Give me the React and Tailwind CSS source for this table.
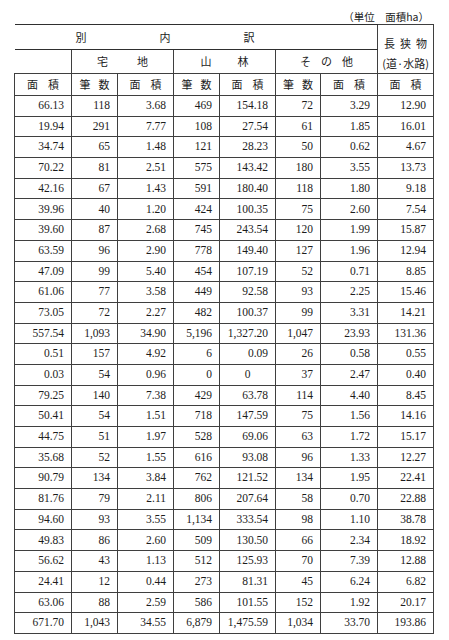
import React from "react";

// 内訳 table rows: 面積 | 宅地(筆数, 面積) | 山林(筆数, 面積) | その他(筆数, 面積) | 長狭物 面積
const rows = [
  ["66.13", "118", "3.68", "469", "154.18", "72", "3.29", "12.90"],
  ["19.94", "291", "7.77", "108", "27.54", "61", "1.85", "16.01"],
  ["34.74", "65", "1.48", "121", "28.23", "50", "0.62", "4.67"],
  ["70.22", "81", "2.51", "575", "143.42", "180", "3.55", "13.73"],
  ["42.16", "67", "1.43", "591", "180.40", "118", "1.80", "9.18"],
  ["39.96", "40", "1.20", "424", "100.35", "75", "2.60", "7.54"],
  ["39.60", "87", "2.68", "745", "243.54", "120", "1.99", "15.87"],
  ["63.59", "96", "2.90", "778", "149.40", "127", "1.96", "12.94"],
  ["47.09", "99", "5.40", "454", "107.19", "52", "0.71", "8.85"],
  ["61.06", "77", "3.58", "449", "92.58", "93", "2.25", "15.46"],
  ["73.05", "72", "2.27", "482", "100.37", "99", "3.31", "14.21"],
  ["557.54", "1,093", "34.90", "5,196", "1,327.20", "1,047", "23.93", "131.36"],
  ["0.51", "157", "4.92", "6", "0.09", "26", "0.58", "0.55"],
  ["0.03", "54", "0.96", "0", "0", "37", "2.47", "0.40"],
  ["79.25", "140", "7.38", "429", "63.78", "114", "4.40", "8.45"],
  ["50.41", "54", "1.51", "718", "147.59", "75", "1.56", "14.16"],
  ["44.75", "51", "1.97", "528", "69.06", "63", "1.72", "15.17"],
  ["35.68", "52", "1.55", "616", "93.08", "96", "1.33", "12.27"],
  ["90.79", "134", "3.84", "762", "121.52", "134", "1.95", "22.41"],
  ["81.76", "79", "2.11", "806", "207.64", "58", "0.70", "22.88"],
  ["94.60", "93", "3.55", "1,134", "333.54", "98", "1.10", "38.78"],
  ["49.83", "86", "2.60", "509", "130.50", "66", "2.34", "18.92"],
  ["56.62", "43", "1.13", "512", "125.93", "70", "7.39", "12.88"],
  ["24.41", "12", "0.44", "273", "81.31", "45", "6.24", "6.82"],
  ["63.06", "88", "2.59", "586", "101.55", "152", "1.92", "20.17"],
  ["671.70", "1,043", "34.55", "6,879", "1,475.59", "1,034", "33.70", "193.86"],
];

const line = "border border-[#3f3f3f]";

function Spaced({ chars, gap }) {
  return (
    <div className={`flex justify-center ${gap}`}>
      {chars.map((c) => (
        <span key={c}>{c}</span>
      ))}
    </div>
  );
}

function Area() {
  return <Spaced chars={["面", "積"]} gap="gap-[10px]" />;
}

function Count() {
  return <Spaced chars={["筆", "数"]} gap="gap-[8px]" />;
}

export default function App() {
  return (
    <div className="h-[640px] w-[449px] bg-white pl-[14px] pt-[9px] font-['Liberation_Serif','Noto_Sans_CJK_JP',serif] text-[#1c1c1c]">
      <p className="h-[15px] w-[419px] pr-[4px] text-right font-['Noto_Sans_CJK_JP',sans-serif] text-[10.5px] leading-[15px]">
        （単位　面積ha）
      </p>

      <table className="w-[419px] table-fixed border-collapse">
        <colgroup>
          <col className="w-[57px]" />
          <col className="w-[46px]" />
          <col className="w-[56px]" />
          <col className="w-[46px]" />
          <col className="w-[56px]" />
          <col className="w-[45px]" />
          <col className="w-[57px]" />
          <col className="w-[56px]" />
        </colgroup>

        {/* header */}
        <thead className="font-['Noto_Sans_CJK_JP',sans-serif] text-[11px] font-normal">
          <tr className="h-[24px]">
            <td
              colSpan={7}
              className="border-t border-b border-[#2f2f2f] p-0 align-middle leading-none"
            >
              <div className="flex gap-[73px] pl-[61px]">
                <span>別</span>
                <span>内</span>
                <span>訳</span>
              </div>
            </td>
            <td rowSpan={2} className={`${line} p-0 pt-[8px] align-top`}>
              <div className="flex justify-center gap-[5px] leading-[20px]">
                <span>長</span>
                <span>狭</span>
                <span>物</span>
              </div>
              <div className="text-center leading-[20px]">(道·水路)</div>
            </td>
          </tr>
          <tr className="h-[23px]">
            <td className="border-r border-b border-[#3f3f3f] p-0" />
            <td colSpan={2} className={`${line} p-0 leading-none`}>
              <Spaced chars={["宅", "地"]} gap="gap-[29px]" />
            </td>
            <td colSpan={2} className={`${line} p-0 leading-none`}>
              <Spaced chars={["山", "林"]} gap="gap-[26px]" />
            </td>
            <td colSpan={2} className={`${line} p-0 leading-none`}>
              <Spaced chars={["そ", "の", "他"]} gap="gap-[10px]" />
            </td>
          </tr>
          <tr className="h-[22px]">
            <td className={`${line} p-0 leading-none`}>
              <Area />
            </td>
            <td className={`${line} p-0 leading-none`}>
              <Count />
            </td>
            <td className={`${line} p-0 leading-none`}>
              <Area />
            </td>
            <td className={`${line} p-0 leading-none`}>
              <Count />
            </td>
            <td className={`${line} p-0 leading-none`}>
              <Area />
            </td>
            <td className={`${line} p-0 leading-none`}>
              <Count />
            </td>
            <td className={`${line} p-0 leading-none`}>
              <Area />
            </td>
            <td className={`${line} p-0 leading-none`}>
              <Area />
            </td>
          </tr>
        </thead>

        {/* data */}
        <tbody className="text-[11.5px]">
          {rows.map((row, r) => (
            <tr key={r} className="h-[20.7px]">
              {row.map((v, c) => (
                <td
                  key={c}
                  className={`${line} p-0 pr-[7px] align-middle leading-none ${
                    c === 4 && v === "0" ? "pl-[7px] text-center" : "text-right"
                  }`}
                >
                  {v}
                </td>
              ))}
            </tr>
          ))}
        </tbody>
      </table>
    </div>
  );
}
